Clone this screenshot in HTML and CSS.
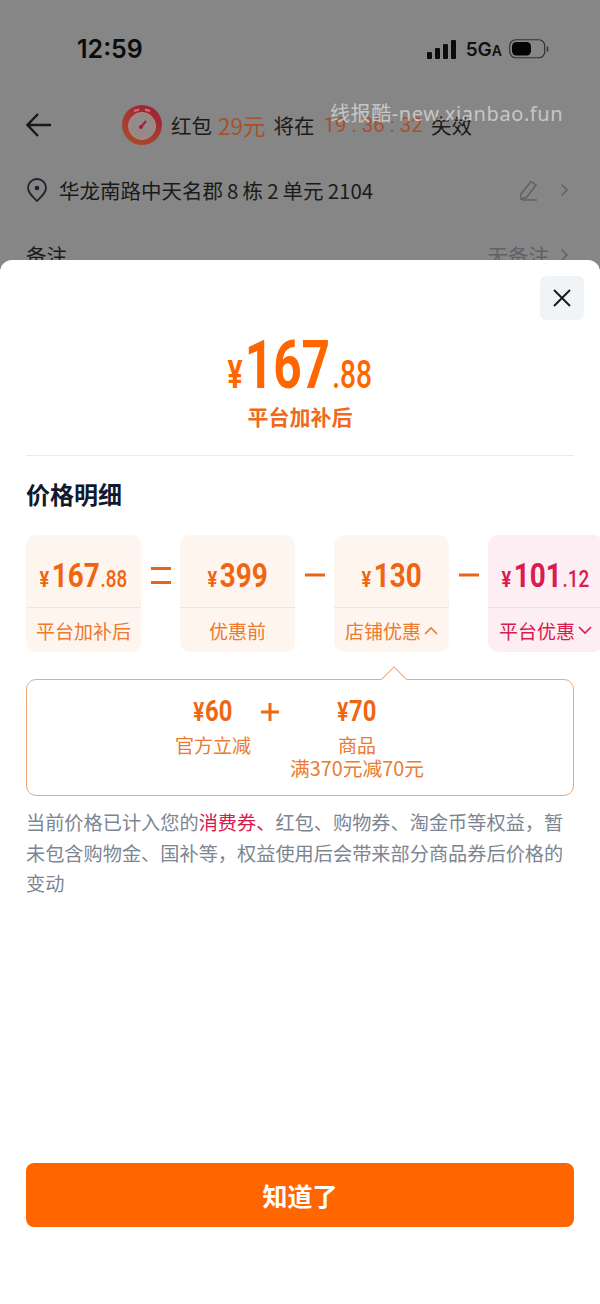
FILE: index.html
```html
<!DOCTYPE html>
<html lang="zh-CN">
  <head>
    <meta charset="UTF-8" />
    <title>价格明细</title>
    <link rel="stylesheet" href="styles.css">
  </head>
  <body>
    <div class="screen">
      <div class="backdrop">
        <div class="status-bar">
          <span class="time">12:59</span>
          <div class="status-icons">
            <svg class="signal" width="31" height="19" viewBox="0 0 31 19">
              <rect x="1" y="12" width="5" height="7" rx="1" />
              <rect x="9" y="8" width="5" height="11" rx="1" />
              <rect x="17" y="4" width="5" height="15" rx="1" />
              <rect x="25" y="0" width="5" height="19" rx="1" />
            </svg>
            <span class="network">5G<small>A</small></span>
            <svg class="battery" width="40" height="20" viewBox="0 0 40 20">
              <rect x="0.75" y="0.75" width="35" height="18" rx="6" fill="none" stroke="#333" stroke-width="1.2" />
              <rect x="3" y="3" width="19" height="13.500" rx="4.500" fill="#050505" />
              <path d="M38.500 7.500v5" stroke="#333" stroke-width="1.500" fill="none" />
            </svg>
          </div>
        </div>

        <div class="nav-row">
          <svg class="back-icon" width="26" height="26" viewBox="0 0 26 26">
            <path d="M25 13H2M12 2L1.500 13L12 24" fill="none" stroke="#16181d" stroke-width="2.400" />
          </svg>
          <svg class="clock-icon" width="40" height="40" viewBox="0 0 40 40">
            <defs>
              <linearGradient id="clockRing" x1="0.8" y1="0" x2="0.2" y2="1">
                <stop offset="0" stop-color="#a21f3a" />
                <stop offset="1" stop-color="#a84e28" />
              </linearGradient>
            </defs>
            <circle cx="20" cy="20" r="20" fill="url(#clockRing)" />
            <circle cx="20" cy="21" r="13.500" fill="#958a88" stroke="#a98f8c" stroke-width="1" />
            <path d="M12 6l5-1.500M23 4.500l5 1.500" stroke="#c9737f" stroke-width="2" fill="none" />
            <path d="M19 22l5-6" stroke="#a21f3a" stroke-width="2" fill="none" />
            <circle cx="19" cy="22" r="2" fill="#a21f3a" />
          </svg>
          <span class="nav-text">红包</span>
          <span class="nav-text nav-hot nav-amount">29元</span>
          <span class="nav-text">将在</span>
          <span class="nav-text nav-hot nav-timer">19 : 36 : 32</span>
          <span class="nav-text">失效</span>
        </div>

        <div class="address-row">
          <svg class="pin-icon" width="22" height="24" viewBox="0 0 22 24">
            <path d="M11 23C6 18 2 14.500 2 10a9 9 0 0 1 18 0C20 14.500 16 18 11 23Z" fill="none" stroke="#20232a" stroke-width="1.800" />
            <circle cx="11" cy="10" r="2.300" fill="#20232a" />
          </svg>
          <span class="address">华龙南路中天名郡 8 栋 2 单元 2104</span>
          <svg class="edit-icon" width="20" height="22" viewBox="0 0 20 22">
            <path d="M2 15L12 2.500l5 3.500L7.500 18.500L2 20Z M3 21h15" fill="none" stroke="#5f6166" stroke-width="1.500" />
          </svg>
          <svg class="chevron" width="9" height="14" viewBox="0 0 9 14">
            <path d="M1.500 1.500L7 7L1.500 12.500" fill="none" stroke="#5f6166" stroke-width="1.500" />
          </svg>
        </div>

        <div class="note-row">
          <span class="note-label">备注</span>
          <span class="note-value">无备注</span>
          <svg class="chevron" width="9" height="14" viewBox="0 0 9 14">
            <path d="M1.500 1.500L7 7L1.500 12.500" fill="none" stroke="#5f6166" stroke-width="1.500" />
          </svg>
        </div>

        <div class="watermark">线报酷-new.xianbao.fun</div>
      </div>

      <div class="sheet">
        <div class="sheet-close">
          <button class="close-btn">
            <svg width="20" height="20" viewBox="0 0 20 20">
              <path d="M2 2L18 18M18 2L2 18" fill="none" stroke="#15171c" stroke-width="1.900" />
            </svg>
          </button>
        </div>

        <div class="summary">
          <div class="price price-main"><span class="yen">¥</span><span class="int">167</span><span class="dec">.88</span></div>
          <div class="summary-label">平台加补后</div>
        </div>

        <h2 class="section-title">价格明细</h2>

        <div class="formula">
          <div class="card">
            <div class="card-price">
              <div class="price"><span class="yen">¥</span><span class="int">167</span><span class="dec">.88</span></div>
            </div>
            <div class="card-label">平台加补后</div>
          </div>
          <div class="op">
            <svg width="20" height="17" viewBox="0 0 20 17"><path d="M0 1.500h20M0 15.500h20" stroke="#e9641b" stroke-width="3" /></svg>
          </div>
          <div class="card">
            <div class="card-price">
              <div class="price"><span class="yen">¥</span><span class="int">399</span></div>
            </div>
            <div class="card-label">优惠前</div>
          </div>
          <div class="op">
            <svg width="20" height="4" viewBox="0 0 20 4"><path d="M0 2h20" stroke="#e9641b" stroke-width="3" /></svg>
          </div>
          <div class="card">
            <div class="card-price">
              <div class="price"><span class="yen">¥</span><span class="int">130</span></div>
            </div>
            <div class="card-label">店铺优惠
              <svg width="14" height="9" viewBox="0 0 14 9"><path d="M1 8L7 2L13 8" fill="none" stroke="#ec7a30" stroke-width="1.600" /></svg>
            </div>
          </div>
          <div class="op">
            <svg width="20" height="4" viewBox="0 0 20 4"><path d="M0 2h20" stroke="#e9641b" stroke-width="3" /></svg>
          </div>
          <div class="card card-pink">
            <div class="card-price">
              <div class="price"><span class="yen">¥</span><span class="int">101</span><span class="dec">.12</span></div>
            </div>
            <div class="card-label">平台优惠
              <svg width="14" height="9" viewBox="0 0 14 9"><path d="M1 1L7 7L13 1" fill="none" stroke="#db1a4f" stroke-width="1.600" /></svg>
            </div>
          </div>
        </div>

        <div class="popover">
          <span class="popover-arrow"></span>
          <div class="popover-item item-official">
            <div class="price"><span class="yen">¥</span><span class="int">60</span></div>
            <div class="item-label">官方立减</div>
          </div>
          <svg class="popover-plus" width="18" height="18" viewBox="0 0 18 18"><path d="M0 9h18M9 0v18" stroke="#ee6a12" stroke-width="3" /></svg>
          <div class="popover-item item-goods">
            <div class="price"><span class="yen">¥</span><span class="int">70</span></div>
            <div class="item-label">商品</div>
            <div class="item-label item-rule">满370元减70元</div>
          </div>
        </div>

        <p class="note">当前价格已计入您的<span class="note-hot">消费券、</span>红包、购物券、淘金币等权益，暂未包含购物金、国补等，权益使用后会带来部分商品券后价格的变动</p>

        <button class="confirm-btn">知道了</button>
      </div>
    </div>
  </body>
</html>
```

FILE: styles.css
```css
/* Global Styles */
* {
  box-sizing: border-box;
  margin: 0;
  padding: 0;
}
body {
  font-family: "Noto Sans CJK SC", "Noto Sans", sans-serif;
  background: #868686;
}
.screen {
  position: relative;
  width: 600px;
  height: 1304px;
  overflow: hidden;
  background: #868686;
}
/* Dimmed page behind the sheet */
.backdrop {
  position: relative;
  height: 260px;
  overflow: hidden;
  padding-top: 29px;
}
.status-bar {
  display: flex;
  align-items: center;
  justify-content: space-between;
  height: 40px;
  padding: 0 51px 0 77px;
}
.time {
  font-family: Inter, sans-serif;
  font-size: 25px;
  font-weight: 600;
  color: #0c0c0c;
}
.status-icons {
  display: flex;
  align-items: center;
}
.signal {
  fill: #0c0c0c;
}
.network {
  margin: 0 7px 0 9px;
  font-family: Inter, sans-serif;
  font-size: 19px;
  font-weight: 600;
  color: #111;
}
.network small {
  font-size: 14px;
}
.nav-row {
  display: flex;
  align-items: center;
  height: 40px;
  margin-top: 36px;
  padding-left: 26px;
}
.back-icon {
  margin-right: 70px;
}
.clock-icon {
  margin-right: 9px;
}
.nav-text {
  margin-right: 8px;
  font-size: 20.500px;
  color: #1a1a1a;
}
.nav-hot {
  color: #a5522d;
}
.nav-amount {
  margin-left: -2px;
  font-size: 22.500px;
}
.nav-timer {
  margin-left: 1px;
  font-family: Roboto, sans-serif;
  white-space: pre;
}
.address-row {
  display: flex;
  align-items: center;
  height: 30px;
  margin-top: 30px;
  padding: 0 31px 0 26px;
}
.pin-icon {
  margin-right: 11px;
}
.address {
  flex: 1;
  font-size: 20.500px;
  word-spacing: -0.500px;
  color: #1a1a1a;
}
.edit-icon {
  margin-right: 21px;
}
.note-row {
  display: flex;
  align-items: center;
  height: 30px;
  margin-top: 35px;
  padding: 0 31px 0 26px;
}
.note-label {
  flex: 1;
  font-size: 20.500px;
  color: #1a1a1a;
}
.note-value {
  margin-right: 11px;
  font-size: 20.500px;
  color: #5f6166;
}
.watermark {
  position: absolute;
  top: 98px;
  left: 330px;
  font-family: "Noto Sans", "Noto Sans CJK SC", sans-serif;
  font-size: 20px;
  letter-spacing: 0.600px;
  color: rgba(255, 255, 255, 0.55);
}
/* Bottom sheet */
.sheet {
  display: flex;
  flex-direction: column;
  height: 1044px;
  overflow: hidden;
  padding: 16px 26px 77px;
  border-radius: 12px 12px 0 0;
  background: #fff;
}
.sheet-close {
  display: flex;
  justify-content: flex-end;
  margin-right: -10px;
}
.close-btn {
  display: flex;
  align-items: center;
  justify-content: center;
  width: 44px;
  height: 44px;
  border: none;
  border-radius: 6px;
  background: #f1f4f7;
}
.summary {
  display: flex;
  flex-direction: column;
  align-items: center;
  height: 136px;
  padding-top: 15px;
  border-bottom: 1px solid #e9ebee;
}
/* Price text: the app's digits are condensed, Roboto is squeezed to match */
.price {
  display: inline-flex;
  align-items: baseline;
  font-family: Roboto, sans-serif;
  font-weight: 700;
  white-space: nowrap;
  color: #ee6612;
  transform: scaleX(0.82);
}
.price .yen {
  font-size: 22px;
  margin-right: 3px;
}
.price .int {
  font-size: 34px;
}
.price .dec {
  font-size: 23px;
  font-weight: 500;
  margin-left: 1px;
}
.price-main {
  line-height: 60px;
  color: #ff6600;
  transform: scaleX(0.74);
}
.price-main .yen {
  font-size: 38px;
  margin-right: 3px;
}
.price-main .int {
  font-size: 67px;
}
.price-main .dec {
  font-size: 38px;
  margin-left: 3px;
}
.summary-label {
  margin-top: -3px;
  font-size: 21px;
  font-weight: 700;
  line-height: 28px;
  color: #ef6a1a;
}
.section-title {
  margin-top: 21px;
  font-size: 24px;
  font-weight: 700;
  line-height: 34px;
  color: #11192d;
}
.formula {
  display: flex;
  margin-top: 24px;
  width: 600px;
}
.card {
  flex: none;
  width: 115px;
  height: 117px;
  border-radius: 10px;
  background: #fff5ef;
}
.card-price {
  display: flex;
  justify-content: center;
  height: 73px;
  padding-top: 18px;
  border-bottom: 1px solid #f5e3d9;
  line-height: 44px;
}
.card-label {
  display: flex;
  align-items: center;
  justify-content: center;
  gap: 3px;
  height: 44px;
  font-size: 19px;
  color: #ec7a30;
}
.card-pink {
  background: #fdeef3;
}
.card-pink .card-price {
  border-bottom-color: #f5dbe2;
}
.card-pink .price,
.card-pink .card-label {
  color: #db1a4f;
}
.op {
  display: flex;
  flex: none;
  align-items: center;
  justify-content: center;
  width: 39px;
  height: 80px;
}
.popover {
  position: relative;
  display: flex;
  height: 117px;
  margin-top: 27px;
  border: 1px solid #f0a878;
  border-radius: 10px;
}
.popover-arrow {
  position: absolute;
  top: -10px;
  left: 358px;
  width: 18px;
  height: 18px;
  border-top: 1px solid #f0a878;
  border-left: 1px solid #f0a878;
  background: #fff;
  transform: rotate(45deg);
}
.popover-item {
  display: flex;
  flex-direction: column;
  align-items: center;
  padding-top: 13px;
}
.popover-item .price {
  height: 40px;
  line-height: 36px;
}
.popover-item .price .int {
  font-size: 29px;
}
.popover-item .price .yen {
  font-size: 25px;
  margin-right: 1px;
}
.item-official {
  width: 76px;
  margin-left: 148px;
}
.popover-plus {
  margin: 23px 0 0 10px;
}
.item-goods {
  width: 136px;
  margin-left: 10px;
}
.item-label {
  font-size: 19px;
  line-height: 23px;
  white-space: nowrap;
  color: #ec7a30;
}
.item-rule {
  font-size: 19.800px;
}
.note {
  margin-top: 11px;
  font-size: 19.200px;
  line-height: 30.500px;
  color: #7d8593;
}
.note-hot {
  color: #db1a4f;
}
.confirm-btn {
  flex: none;
  height: 64px;
  margin-top: auto;
  border: none;
  border-radius: 8px;
  background: #ff6600;
  font-family: "Noto Sans CJK SC", sans-serif;
  font-size: 25px;
  font-weight: 700;
  color: #fff;
}
```
